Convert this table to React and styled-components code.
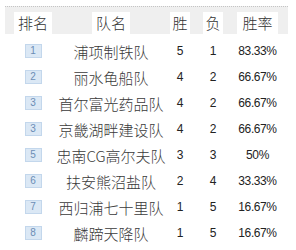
import React from 'react';
import styled, { createGlobalStyle } from 'styled-components';

const GlobalStyle = createGlobalStyle`
  body {
    margin: 0;
    background: #fff;
    font-family: "Noto Sans CJK SC", "Liberation Sans", sans-serif;
  }
`;

const cols = '56px 100px 38px 28px 61px';

const Table = styled.div`
  width: 283px;
  margin: 6px 0 0 5px;
`;

const Head = styled.div`
  display: grid;
  grid-template-columns: ${cols};
  height: 28px;
  align-items: end;
  background: #efefef;
  border-top: 1px dotted #c4c4c4;
  box-sizing: border-box;
`;

const HeadCell = styled.div`
  display: flex;
  justify-content: center;
`;

const HeadLabel = styled.span`
  background: #fff;
  height: 22px;
  line-height: 22px;
  padding: 0 ${(props) => props.pad || 4}px;
  font-size: 15px;
  font-weight: 300;
  color: #333;
`;

const Body = styled.div`
  margin-top: 4px;
`;

const Row = styled.div`
  display: grid;
  grid-template-columns: ${cols};
  height: 26px;
  align-items: center;
`;

const Cell = styled.div`
  display: flex;
  justify-content: center;
  align-items: center;
`;

const Badge = styled.span`
  width: 17px;
  height: 14px;
  box-sizing: border-box;
  background: #dbe8f5;
  border: 1px solid #c3d7ec;
  color: #6b8db5;
  font: 10px/12px "Liberation Sans", sans-serif;
  text-align: center;
`;

const Team = styled.span`
  font-size: 15px;
  font-weight: 300;
  color: #3a3a3a;
  white-space: nowrap;
`;

const Num = styled.span`
  font-family: "Liberation Sans Narrow", "Liberation Sans", sans-serif;
  font-size: 12px;
  color: #222;
  letter-spacing: ${(props) => props.tight ? '-0.4px' : '0'};
`;

const teams = [
  { rank: 1, name: '浦项制铁队', win: 5, lose: 1, rate: '83.33%' },
  { rank: 2, name: '丽水龟船队', win: 4, lose: 2, rate: '66.67%' },
  { rank: 3, name: '首尔富光药品队', win: 4, lose: 2, rate: '66.67%' },
  { rank: 3, name: '京畿湖畔建设队', win: 4, lose: 2, rate: '66.67%' },
  { rank: 5, name: '忠南CG高尔夫队', win: 3, lose: 3, rate: '50%' },
  { rank: 6, name: '扶安熊沼盐队', win: 2, lose: 4, rate: '33.33%' },
  { rank: 7, name: '西归浦七十里队', win: 1, lose: 5, rate: '16.67%' },
  { rank: 8, name: '麟蹄天降队', win: 1, lose: 5, rate: '16.67%' },
];

const App = () => {
  return (
    <>
      <GlobalStyle />
      <Table>
        <Head>
          <HeadCell><HeadLabel>排名</HeadLabel></HeadCell>
          <HeadCell><HeadLabel>队名</HeadLabel></HeadCell>
          <HeadCell><HeadLabel pad={2}>胜</HeadLabel></HeadCell>
          <HeadCell><HeadLabel pad={2}>负</HeadLabel></HeadCell>
          <HeadCell><HeadLabel pad={5}>胜率</HeadLabel></HeadCell>
        </Head>
        <Body>
          {teams.map((t, i) => (
            <Row key={i}>
              <Cell><Badge>{t.rank}</Badge></Cell>
              <Cell><Team>{t.name}</Team></Cell>
              <Cell><Num>{t.win}</Num></Cell>
              <Cell><Num>{t.lose}</Num></Cell>
              <Cell><Num tight>{t.rate}</Num></Cell>
            </Row>
          ))}
        </Body>
      </Table>
    </>
  );
};

export default App;
